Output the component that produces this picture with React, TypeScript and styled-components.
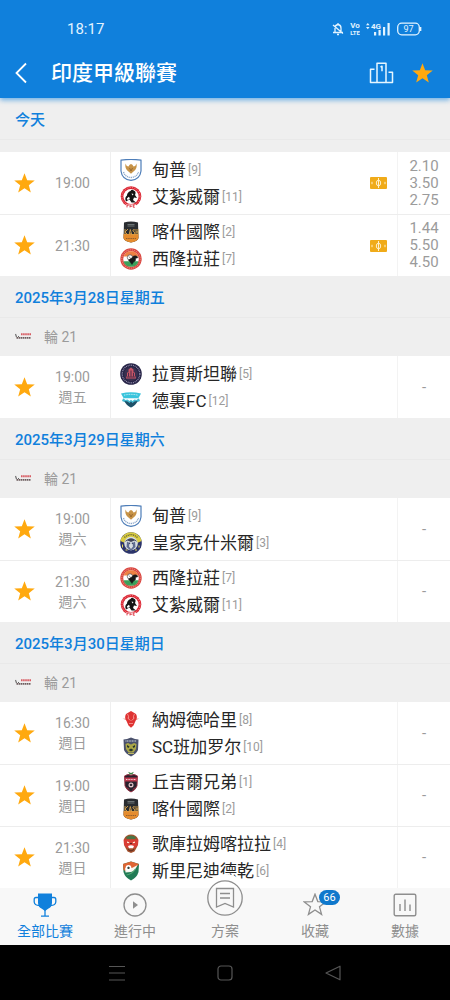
import React from 'react';
import styled, { createGlobalStyle } from 'styled-components';

const BLUE = '#1080dc';
const ORANGE = '#ffa90f';
const GREY = '#9b9b9b';

const GlobalStyle = createGlobalStyle`
  * { box-sizing: border-box; }
  body {
    margin: 0;
    background: #efefef;
    color: #262626;
    font-family: Roboto, "Noto Sans CJK TC", sans-serif;
  }
  button {
    display: flex;
    align-items: center;
    justify-content: center;
    margin: 0;
    padding: 0;
    border: 0;
    background: none;
    color: inherit;
    font: inherit;
    cursor: pointer;
  }
  svg { display: block; flex: none; }
`;

const Screen = styled.div`
  display: flex;
  flex-direction: column;
  min-height: 100vh;
`;

const Header = styled.header`
  position: sticky;
  top: 0;
  z-index: 2;
  background: ${BLUE};
  color: #fff;
  box-shadow: 0 2px 5px rgba(16, 128, 220, 0.6);
`;

const StatusBar = styled.div`
  display: flex;
  align-items: center;
  justify-content: space-between;
  height: 48px;
  padding: 10px 28px 0 67px;
  color: #e2f3ff;
  font-size: 15px;
`;

const StatusIcons = styled.div`
  display: flex;
  align-items: center;
  gap: 6px;
`;

const AppBar = styled.div`
  display: flex;
  align-items: center;
  height: 50px;
  padding: 0 15px 0 9px;
`;

const BackButton = styled.button`
  width: 24px;
  height: 32px;
`;

const Title = styled.h1`
  flex: 1;
  margin: 0 0 0 18px;
  font-size: 21px;
  line-height: 32px;
  font-weight: 500;
`;

const BarActions = styled.div`
  display: flex;
  gap: 16px;
`;

const ActionButton = styled.button`
  width: 25px;
  height: 32px;
`;

const Schedule = styled.main`
  flex: 1;
`;

const DayTitle = styled.h2`
  margin: 0;
  height: 42px;
  padding: 0 15px;
  border-bottom: 1px solid #e9e9e9;
  color: ${BLUE};
  font-size: 15px;
  line-height: 44px;
  font-weight: 500;
`;

const TodayGap = styled.div`
  height: 12px;
`;

const Round = styled.div`
  display: flex;
  align-items: center;
  gap: 12px;
  height: 38px;
  padding: 0 15px 3px;
  color: ${GREY};
  font-size: 14px;
`;

const MatchList = styled.ul`
  margin: 0;
  padding: 0;
  list-style: none;
`;

const MatchRow = styled.li`
  display: grid;
  grid-template-columns: 48px 63px 1fr 53px;
  height: 62px;
  background: #fff;

  & + & { border-top: 1px solid #ededed; }
`;

const StarButton = styled.button`
  height: 100%;
`;

const Kickoff = styled.div`
  display: flex;
  flex-direction: column;
  align-items: center;
  justify-content: center;
  padding-right: 13px;
  border-right: 1px solid #efefef;
  color: ${GREY};
  font-size: 14px;
  line-height: 20px;
`;

const Teams = styled.div`
  display: flex;
  align-items: center;
  justify-content: space-between;
  padding: 0 10px 0 9px;
`;

const TeamLine = styled.div`
  display: flex;
  align-items: center;
  height: 27px;
`;

const TeamName = styled.span`
  margin: 0 2px 0 10px;
  font-size: 17px;
  line-height: 26px;
  white-space: nowrap;
`;

const Rank = styled.span`
  color: ${GREY};
  font-size: 12px;
`;

const Odds = styled.div`
  display: flex;
  flex-direction: column;
  align-items: center;
  justify-content: center;
  border-left: 1px solid #f3f3f3;
  color: ${GREY};
  font-size: 15px;
  line-height: 17px;
`;

const TabBar = styled.nav`
  position: sticky;
  bottom: 55px;
  z-index: 1;
  display: grid;
  grid-template-columns: repeat(5, 1fr);
  height: 57px;
  background: #f8f8f8;
`;

const Tab = styled.button<{ $active?: boolean }>`
  && {
    position: relative;
    flex-direction: column;
    justify-content: flex-start;
    gap: 4px;
    padding-top: 5px;
    color: ${(p) => (p.$active ? BLUE : '#8e8e8e')};
    font-size: 14px;
    line-height: 20px;
  }
`;

const TabIcon = styled.span`
  display: flex;
  align-items: center;
  justify-content: center;
  height: 24px;
`;

const RaisedIcon = styled.span`
  position: absolute;
  top: -14px;
  left: 50%;
  display: flex;
  align-items: center;
  justify-content: center;
  width: 48px;
  height: 48px;
  transform: translateX(-50%);
  border-radius: 50%;
  background: linear-gradient(#fff 14px, #f8f8f8 14px);
`;

const Badge = styled.span`
  position: absolute;
  top: 2px;
  left: 50%;
  width: 21px;
  margin-left: 4px;
  border-radius: 8px;
  background: #0f78cc;
  color: #fff;
  font-size: 11px;
  line-height: 15px;
  text-align: center;
`;

const SystemBar = styled.footer`
  position: sticky;
  bottom: 0;
  z-index: 1;
  display: flex;
  align-items: center;
  justify-content: center;
  gap: 84px;
  height: 55px;
  background: #000;
  color: #565656;
`;

const SystemButton = styled.button`
  width: 24px;
  height: 32px;
`;

const STAR = 'M12 1.200l2.800 7.400 7.900.3-6.200 4.900 2.100 7.600-6.600-4.400-6.600 4.400 2.100-7.600-6.200-4.900 7.900-.3z';

function Star({ size }: { size: number }) {
  return (
    <svg width={size} height={size} viewBox="0 0 24 24" aria-hidden="true">
      <path d={STAR} fill={ORANGE} />
    </svg>
  );
}

type CrestName =
  | 'dempo' | 'aizawl' | 'kashi' | 'shillong' | 'rajasthan' | 'delhi'
  | 'kashmir' | 'namdhari' | 'bengaluru' | 'churchill' | 'gokulam' | 'sreenidi';

const crests: Record<CrestName, React.ReactNode> = {
  dempo: (
    <>
      <path d="M1 1.200Q11-.4 21 1.200V12Q20 20.500 11 21.300Q2 20.500 1 12Z" fill="#fff" stroke="#4d7db8" strokeWidth="1.200" />
      <path d="M3.500 13Q5 18 11 18.500Q17 18 18.500 13" fill="none" stroke="#8fa9cb" strokeWidth="1.300" strokeDasharray="1.200 .7" />
      <path d="M5.500 4.500Q6 7 8.500 7.500Q9.500 5 11 5Q12.500 5 13.500 7.500Q16 7 16.500 4.500Q17.500 10 13.500 12.500L11 14.800L8.500 12.500Q4.500 10 5.500 4.500Z" fill="#c79347" />
      <path d="M9.500 9l1.500 3 1.500-3" fill="none" stroke="#8d5d29" strokeWidth=".8" />
    </>
  ),
  aizawl: (
    <>
      <circle cx="11" cy="10.500" r="10.300" fill="#dc2734" />
      <circle cx="11" cy="10.500" r="9" fill="none" stroke="#f2a1a4" strokeWidth=".9" strokeDasharray="1 1.400" />
      <circle cx="11" cy="10.500" r="7.600" fill="#fff" />
      <path d="M10.500 5Q12 2.800 14 4.800Q16.500 5.500 15 9L17 12 14 11.500 13 14 16 16.500 11.500 16.500 9.500 13.500 6 15.500Q4.200 11.500 7 9.500Q7 6.500 10.500 5Z" fill="#151515" />
      <path d="M6.800 12.500l2-1.800 1.200 1.500-2.200 2zM11.500 7.500l2 .5-1 1.500z" fill="#fff" />
      <path d="M6 18.500h10v3H6z" fill="#fff" />
      <path d="M7 19v2.400M7 19.200h1.800M10 19v2.400M10 20.200h2M14.800 19h-1.600v2.200h1.600" stroke="#dc2734" strokeWidth=".9" fill="none" />
    </>
  ),
  kashi: (
    <>
      <path d="M4 1.500Q11-.5 18 1.500L18.500 17Q18 20 11 21.500Q4 20 3.500 17Z" fill="#292c30" />
      <path d="M4 13h14.400l.1 4Q18 20 11 21.500Q4 20 3.500 17V13Z" fill="#e58c2e" />
      <path d="M7.500 3.500h7M7.500 5h7" stroke="#7d8587" strokeWidth=".8" />
      <path d="M5 8v6M8 8l-3 3 3 3M9 14l1.300-5.500L11.800 14M9.500 12.300h2M15 9Q12.800 7.800 12.800 10Q15.200 10.500 14.800 13Q14 14.500 12.500 13.500M16 8v6M18 8v6M16 11h2" stroke="#d8a34d" strokeWidth=".9" fill="none" />
      <path d="M6 17.500h10" stroke="#95602c" strokeWidth="1.200" strokeDasharray="1.500 .7" />
    </>
  ),
  shillong: (
    <>
      <circle cx="11" cy="11" r="10.700" fill="#d94640" />
      <circle cx="11" cy="11" r="9.200" fill="none" stroke="#ef9c8f" strokeWidth=".9" strokeDasharray="1.200 1" />
      <circle cx="11" cy="11" r="7.800" fill="#fff" />
      <path d="M3.600 8.500A7.800 7.800 0 0118.400 8.500Z" fill="#ee8143" />
      <path d="M3.500 13.200H18.500A7.800 7.800 0 013.500 13.200Z" fill="#3aa05a" />
      <circle cx="10" cy="9.500" r="2.700" fill="#fff" stroke="#333" strokeWidth=".6" />
      <path d="M9 8.500l1.500 2M8.500 12Q12 10.500 13.500 8Q17 7 18 9.500L15.500 10.500Q16 13.500 13.500 14L12 16.500L10.500 14.500Z" fill="#181818" stroke="#181818" strokeWidth=".5" />
    </>
  ),
  rajasthan: (
    <>
      <circle cx="11" cy="11" r="10.800" fill="#262346" />
      <circle cx="11" cy="11" r="8.800" fill="none" stroke="#9a95b1" strokeWidth="1.300" strokeDasharray=".9 .9" />
      <circle cx="11" cy="11" r="7" fill="#39304f" />
      <path d="M6 15.500h10v-2h-1v-4h-1.500V6.500L11 4.500 8.500 6.500v3H7v4H6z" fill="#c85466" />
      <path d="M8.500 10v3.500M11 7.500v6M13.500 10v3.500M6.500 14h9" stroke="#2c2442" strokeWidth=".8" />
    </>
  ),
  delhi: (
    <>
      <path d="M1 3.500Q11 1 21 3.500L18.500 8H3.500Z" fill="#39c4dc" />
      <path d="M4 5.200Q11 3.500 18 5.200" fill="none" stroke="#d5f5fa" strokeWidth="1" strokeDasharray="1 .7" />
      <path d="M3 8.500H19L20 11 16.500 12.500Q15 15.500 11 17.500Q7 15.500 5.500 12.500L2 11Z" fill="#45b9d1" />
      <path d="M3.500 8.500H18.500L16.500 10 14.500 9.500 12.500 11 11 9.800 9.500 11 7.500 9.500 5.500 10Z" fill="#fff" />
      <path d="M4.500 11L7.500 11.500 9.500 13 11 11.500 12.500 13 14.500 11.500 17.500 11Q16 15 11 17.500Q6 15 4.500 11Z" fill="#1f5068" />
    </>
  ),
  kashmir: (
    <>
      <circle cx="11" cy="11" r="10.800" fill="#2c356b" />
      <path d="M.4 9A10.800 10.800 0 0121.600 9L17 11H5Z" fill="#d9cc42" />
      <path d="M4.500 5.500Q11-.2 17.500 5.500" fill="none" stroke="#565536" strokeWidth="1.300" strokeDasharray="1 .9" />
      <circle cx="11" cy="11.500" r="6.800" fill="#d8dee1" />
      <path d="M4.500 10Q11 2.500 17.500 10L14.500 8.500 11 10 7.500 8.500Z" fill="#41465a" />
      <path d="M7 9.500L9.500 11 9 14.500 11 17 13 14.500 12.500 11 15 9.500 15.500 15 11 19 6.500 15Z" fill="#5f6d91" />
      <path d="M9 11.200h1.200M11.800 11.200H13" stroke="#16204c" strokeWidth="1" />
      <path d="M2.500 12.500v3M19 13.500v2M5.500 18h2M15 18h2" stroke="#e5d957" strokeWidth="1" />
    </>
  ),
  namdhari: (
    <>
      <path d="M2.500 9.500L19.500 9.500 16.500 11 5.500 11Z" fill="#f0a9a4" />
      <path d="M11 2L16 5Q18 8.500 15.500 12L13.500 16.500 11 18.800 8.500 16.500 6.500 12Q4 8.500 6 5Z" fill="#df3333" />
      <path d="M7.500 5Q9 7 8.500 9.500M14.500 5Q13 7 13.500 9.500M7.500 9l3 2.500M14.500 9l-3 2.500M9 14.500h4" stroke="#ffc4bd" strokeWidth=".6" fill="none" />
    </>
  ),
  bengaluru: (
    <>
      <path d="M3.500 3.500L7 3 11 1.500 15 3 18.500 3.500 18 14Q16.500 17.500 11 20.500Q5.500 17.500 4 14Z" fill="#4a516c" />
      <path d="M5.500 5h11" stroke="#aeb6c3" strokeWidth="1.400" strokeDasharray="1 .6" />
      <path d="M5.500 8L8 7 11 8.500 14 7 16.500 8 16 13 13.500 16.500H8.500L6 13Z" fill="#aaa647" />
      <path d="M7 9l2.500 1.500L8.500 12 7 11zM15 9l-2.500 1.500 1 1.500 1.500-1zM8.500 14L11 12.500 13.500 14 11 15.500z" fill="#26362c" />
      <path d="M8 17.500h6" stroke="#d7cf62" strokeWidth=".8" />
    </>
  ),
  churchill: (
    <>
      <path d="M11 2L8 .8 9.500 2.800 7 3.500H15L12.500 2.800 14 .8Z" fill="#3a8243" />
      <path d="M4.500 5Q8 2.500 11 4.300Q14 2.500 17.500 5L17 15Q15.500 19 11 21Q6.500 19 5 15Z" fill="#29212d" stroke="#9d3042" strokeWidth=".9" />
      <path d="M5 6.500h12v4H5z" fill="#bc394d" />
      <path d="M6 8.500h10" stroke="#f3cdd2" strokeWidth="1.200" strokeDasharray="1 .6" />
      <circle cx="11" cy="14" r="2.500" fill="#e2c4c8" />
      <path d="M11 12.500l1.400 1-.5 1.600h-1.800l-.5-1.600z" fill="#312531" />
      <path d="M7 16.500l2 2M15 16.500l-2 2" stroke="#bc394d" strokeWidth="1" />
    </>
  ),
  gokulam: (
    <>
      <path d="M4 6Q6 1.500 11 1.500Q16 1.500 18 6L17.500 13 14.500 18.500 11 20 7.500 18.500 4.500 13Z" fill="#a4512d" />
      <path d="M6 4Q11 .8 16 4L15 6H7Z" fill="#4c7446" />
      <path d="M3.500 6.500H18.500L18 12 15 15H7L4 12Z" fill="#d93d34" />
      <path d="M7 8.500l2.500.8-1 .9-1.500-.4zM15 8.500l-2.500.8 1 .9 1.500-.4z" fill="#fff3dc" />
      <path d="M8 13Q11 11.500 14 13L13 15.200H9Z" fill="#fff" />
      <path d="M10 10.500h2M8 16.500l3 1.500 3-1.500" stroke="#50251e" strokeWidth=".9" fill="none" />
    </>
  ),
  sreenidi: (
    <>
      <path d="M3 4L11 1.500 19 4 18.500 12Q17 17.500 11 20.500Q5 17.500 3.500 12Z" fill="#217b55" />
      <path d="M3 4L11 1.500 19 4 14 9.500 7 11.500 3.500 10Z" fill="#df6534" />
      <path d="M5 8Q10 10 17.500 5Q15 11 11 12L5.500 12.500Z" fill="#f8f8f0" />
      <circle cx="8.500" cy="8" r="2.900" fill="#fff" />
      <path d="M8.500 6.600l1.300 1-.5 1.500H7.700l-.5-1.500z" fill="#37443f" />
      <path d="M6.500 15Q12 14 15.500 9" stroke="#52a573" strokeWidth="1.200" fill="none" />
    </>
  ),
};

function Crest({ name }: { name: CrestName }) {
  return (
    <svg width="22" height="22" viewBox="0 0 22 22" aria-hidden="true">
      {crests[name]}
    </svg>
  );
}

interface Team { name: string; crest: CrestName; rank: number }

const T: Record<CrestName, Team> = {
  dempo: { name: '甸普', crest: 'dempo', rank: 9 },
  aizawl: { name: '艾紮威爾', crest: 'aizawl', rank: 11 },
  kashi: { name: '喀什國際', crest: 'kashi', rank: 2 },
  shillong: { name: '西隆拉莊', crest: 'shillong', rank: 7 },
  rajasthan: { name: '拉賈斯坦聯', crest: 'rajasthan', rank: 5 },
  delhi: { name: '德裏FC', crest: 'delhi', rank: 12 },
  kashmir: { name: '皇家克什米爾', crest: 'kashmir', rank: 3 },
  namdhari: { name: '納姆德哈里', crest: 'namdhari', rank: 8 },
  bengaluru: { name: 'SC班加罗尔', crest: 'bengaluru', rank: 10 },
  churchill: { name: '丘吉爾兄弟', crest: 'churchill', rank: 1 },
  gokulam: { name: '歌庫拉姆喀拉拉', crest: 'gokulam', rank: 4 },
  sreenidi: { name: '斯里尼迪德乾', crest: 'sreenidi', rank: 6 },
};

interface Match { time: string; weekday?: string; home: Team; away: Team; odds?: string[] }
interface Day { title: string; round?: string; matches: Match[] }

const days: Day[] = [
  {
    title: '今天',
    matches: [
      { time: '19:00', home: T.dempo, away: T.aizawl, odds: ['2.10', '3.50', '2.75'] },
      { time: '21:30', home: T.kashi, away: T.shillong, odds: ['1.44', '5.50', '4.50'] },
    ],
  },
  {
    title: '2025年3月28日星期五',
    round: '輪 21',
    matches: [{ time: '19:00', weekday: '週五', home: T.rajasthan, away: T.delhi }],
  },
  {
    title: '2025年3月29日星期六',
    round: '輪 21',
    matches: [
      { time: '19:00', weekday: '週六', home: T.dempo, away: T.kashmir },
      { time: '21:30', weekday: '週六', home: T.shillong, away: T.aizawl },
    ],
  },
  {
    title: '2025年3月30日星期日',
    round: '輪 21',
    matches: [
      { time: '16:30', weekday: '週日', home: T.namdhari, away: T.bengaluru },
      { time: '19:00', weekday: '週日', home: T.churchill, away: T.kashi },
      { time: '21:30', weekday: '週日', home: T.gokulam, away: T.sreenidi },
    ],
  },
];

function LeagueLogo() {
  return (
    <svg width="17" height="8" viewBox="0 0 17 8" aria-hidden="true">
      <path d="M.5 2l1 3M3 4.500h1" stroke="#666" strokeWidth="1.100" />
      <path d="M6 2.300h10.500" stroke="#d75b62" strokeWidth="2" strokeDasharray="1.600 .5" />
      <path d="M1.500 5.800h14.500" stroke="#6d5d5f" strokeWidth="1.700" strokeDasharray="1.500 .5" />
    </svg>
  );
}

function PitchIcon() {
  return (
    <svg width="17" height="12" viewBox="0 0 17 12" aria-hidden="true">
      <rect width="17" height="12" rx="1" fill="#f0ab19" />
      <ellipse cx="8.500" cy="6" rx="2.200" ry="2.800" fill="none" stroke="#fff0cc" strokeWidth="1" />
      <path d="M8.500 1v10M2 4.800v2.400M15 4.800v2.400" stroke="#fff0cc" strokeWidth="1" />
    </svg>
  );
}

function TeamEntry({ team }: { team: Team }) {
  return (
    <TeamLine>
      <Crest name={team.crest} />
      <TeamName>{team.name}</TeamName>
      <Rank>[{team.rank}]</Rank>
    </TeamLine>
  );
}

function MatchItem({ match }: { match: Match }) {
  return (
    <MatchRow>
      <StarButton aria-label="收藏"><Star size={23} /></StarButton>
      <Kickoff>
        <span>{match.time}</span>
        {match.weekday && <span>{match.weekday}</span>}
      </Kickoff>
      <Teams>
        <div>
          <TeamEntry team={match.home} />
          <TeamEntry team={match.away} />
        </div>
        {match.odds && <PitchIcon />}
      </Teams>
      <Odds>
        {match.odds ? match.odds.map((o) => <span key={o}>{o}</span>) : <span>-</span>}
      </Odds>
    </MatchRow>
  );
}

function StatusGlyphs() {
  return (
    <StatusIcons aria-hidden="true">
      <svg width="12" height="14" viewBox="0 0 12 14" fill="none" stroke="#e2f3ff" strokeWidth="1.300">
        <path d="M3 10V6Q3 3 6 2.500Q9 3 9 6V10M1 10.500h10M5 12.500h2M6 1v1.500M1 3l10 8.500" />
      </svg>
      <svg width="10" height="14" viewBox="0 0 10 14" fill="#e2f3ff" fontFamily="Roboto, sans-serif" fontWeight="700" textAnchor="middle">
        <text x="5" y="6" fontSize="8">Vo</text>
        <text x="5" y="13" fontSize="6">LTE</text>
      </svg>
      <svg width="25" height="14" viewBox="0 0 25 14" fill="#e2f3ff" fontFamily="Roboto, sans-serif">
        <path d="M0 3.200L1.800 1l1.800 2.200zM0 5L1.800 7.200 3.600 5z" />
        <text x="5" y="6.500" fontSize="8" fontWeight="700">4G</text>
        <path d="M8 10h2.200v3.500H8zM12.500 8h2.200v5.500h-2.200zM17 5h2.200v8.500H17zM21.500 1h2.200v12.500h-2.200z" />
      </svg>
      <svg width="25" height="14" viewBox="0 0 25 14" fontFamily="Roboto, sans-serif">
        <rect x=".7" y="1.200" width="21.600" height="11.600" rx="4" fill="none" stroke="#e2f3ff" strokeWidth="1.300" />
        <path d="M23.600 5v4" stroke="#e2f3ff" strokeWidth="1.500" />
        <text x="11.500" y="10.200" fontSize="9" fill="#e2f3ff" textAnchor="middle">97</text>
      </svg>
    </StatusIcons>
  );
}

export default function App() {
  return (
    <Screen>
      <GlobalStyle />
      <Header>
        <StatusBar>
          <span>18:17</span>
          <StatusGlyphs />
        </StatusBar>
        <AppBar>
          <BackButton aria-label="返回">
            <svg width="14" height="22" viewBox="0 0 14 22" fill="none" stroke="#fff" strokeWidth="1.800">
              <path d="M12 1.500L2.500 11 12 20.500" />
            </svg>
          </BackButton>
          <Title>印度甲級聯賽</Title>
          <BarActions>
            <ActionButton aria-label="積分榜">
              <svg width="25" height="22" viewBox="0 0 25 22" fill="none" stroke="#e6f6ff" strokeWidth="1.500">
                <path d="M8 20.500V1.200h9v19.300M5.500 7.200H1.500V20.500H23.500V10.200H19.500M11.500 5.200l1.500-1v5" strokeLinejoin="round" />
              </svg>
            </ActionButton>
            <ActionButton aria-label="收藏聯賽"><Star size={23} /></ActionButton>
          </BarActions>
        </AppBar>
      </Header>

      <Schedule>
        {days.map((day) => (
          <section key={day.title}>
            <DayTitle>{day.title}</DayTitle>
            {day.round ? <Round><LeagueLogo />{day.round}</Round> : <TodayGap />}
            <MatchList>
              {day.matches.map((m) => <MatchItem key={m.time} match={m} />)}
            </MatchList>
          </section>
        ))}
      </Schedule>

      <TabBar>
        <Tab $active>
          <TabIcon>
            <svg width="24" height="24" viewBox="0 0 24 24">
              <path d="M5 .5H19V10Q18.500 14.500 15.500 15.500L12 18 8.500 15.500Q5.500 14.500 5 10Z" fill={BLUE} />
              <path d="M5.500 4.500H3Q1.200 4.500 1.200 6.500V9Q1.500 12.500 6.500 12.500M18.500 4.500H21Q22.800 4.500 22.800 6.500V9Q22.500 12.500 17.500 12.500M12 16v7M8 23.200h8" fill="none" stroke={BLUE} strokeWidth="1.300" />
            </svg>
          </TabIcon>
          全部比賽
        </Tab>
        <Tab>
          <TabIcon>
            <svg width="24" height="24" viewBox="0 0 24 24">
              <circle cx="12" cy="12" r="11" fill="none" stroke="currentColor" strokeWidth="1.300" />
              <path d="M10 8.300v7.400l5-3.700z" fill="currentColor" />
            </svg>
          </TabIcon>
          進行中
        </Tab>
        <Tab>
          <TabIcon />
          <RaisedIcon>
            <svg width="36" height="36" viewBox="0 0 36 36" fill="none" stroke="currentColor" strokeWidth="1.300">
              <circle cx="18" cy="18" r="17.200" />
              <path d="M9.500 8.500h17v18.500L18 23.500 9.500 27zM13 13.500h10M13 18h10" />
            </svg>
          </RaisedIcon>
          方案
        </Tab>
        <Tab>
          <TabIcon>
            <svg width="24" height="24" viewBox="0 0 24 24" fill="none" stroke="currentColor" strokeWidth="1.300">
              <path d={STAR} />
            </svg>
          </TabIcon>
          <Badge>66</Badge>
          收藏
        </Tab>
        <Tab>
          <TabIcon>
            <svg width="24" height="24" viewBox="0 0 24 24" fill="none" stroke="currentColor" strokeWidth="1.400">
              <rect x="1.200" y="1.200" width="21.600" height="21.600" rx="1.500" />
              <path d="M7 11v7M12 6.500V18M17 11.500V18" />
            </svg>
          </TabIcon>
          數據
        </Tab>
      </TabBar>

      <SystemBar>
        <SystemButton aria-label="選單">
          <svg width="16" height="16" viewBox="0 0 16 16" stroke="currentColor" strokeWidth="1.200">
            <path d="M0 1.500h16M0 8h16M0 15h16" />
          </svg>
        </SystemButton>
        <SystemButton aria-label="主畫面">
          <svg width="16" height="16" viewBox="0 0 16 16" fill="none" stroke="currentColor" strokeWidth="1.200">
            <rect x="1" y="1" width="14" height="14" rx="3" />
          </svg>
        </SystemButton>
        <SystemButton aria-label="上一頁">
          <svg width="16" height="16" viewBox="0 0 16 16" fill="none" stroke="currentColor" strokeWidth="1.200" strokeLinejoin="round">
            <path d="M15 1.200v13.600L1 8z" />
          </svg>
        </SystemButton>
      </SystemBar>
    </Screen>
  );
}
